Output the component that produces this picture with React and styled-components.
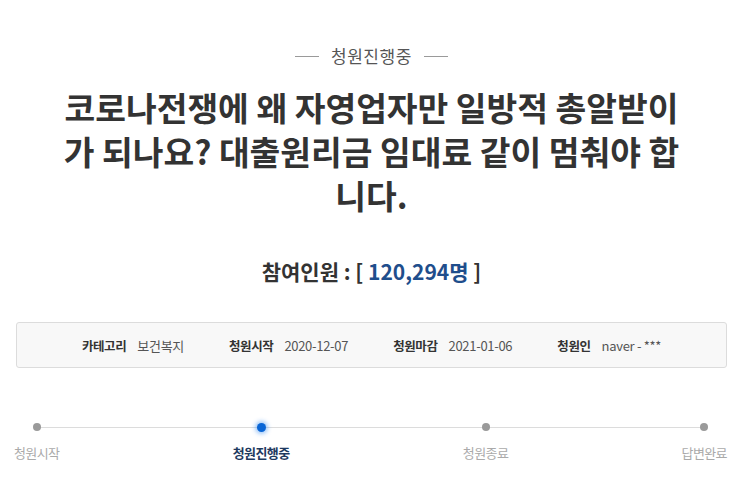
import React from 'react'
import styled, { createGlobalStyle } from 'styled-components'

const GlobalStyle = createGlobalStyle`
  body {
    margin: 0;
    background: #fff;
    font-family: "Noto Sans CJK KR", "Noto Sans", sans-serif;
  }
`

const info = [
  { label: '카테고리', value: '보건복지' },
  { label: '청원시작', value: '2020-12-07' },
  { label: '청원마감', value: '2021-01-06' },
  { label: '청원인', value: 'naver - ***' },
]

const steps = [
  { name: '청원시작' },
  { name: '청원진행중', active: true },
  { name: '청원종료' },
  { name: '답변완료' },
]

export default function App() {
  return (
    <Page>
      <GlobalStyle />
      <Status>
        <Rule />
        <StatusText>청원진행중</StatusText>
        <Rule />
      </Status>
      <Title>코로나전쟁에 왜 자영업자만 일방적 총알받이 가 되나요? 대출원리금 임대료 같이 멈춰야 합니다.</Title>
      <Count>
        참여인원 : [ <Number>120,294명</Number> ]
      </Count>
      <InfoBox>
        {info.map((item) => (
          <InfoItem key={item.label}>
            <InfoLabel>{item.label}</InfoLabel>
            <InfoValue>{item.value}</InfoValue>
          </InfoItem>
        ))}
      </InfoBox>
      <Track>
        {steps.map((step) => (
          <Step key={step.name}>
            <DotArea>
              <Dot active={step.active} />
            </DotArea>
            <StepName active={step.active}>{step.name}</StepName>
          </Step>
        ))}
      </Track>
    </Page>
  )
}

const Page = styled.div`
  width: 743px;
  height: 490px;
  padding-top: 44px;
  box-sizing: border-box;
  display: flex;
  flex-direction: column;
  align-items: center;
`

const Status = styled.div`
  display: flex;
  align-items: center;
  gap: 12px;
  height: 24px;
`

const Rule = styled.span`
  width: 24px;
  height: 1px;
  background: #9a9a9a;
`

const StatusText = styled.span`
  font-size: 17px;
  line-height: 24px;
  letter-spacing: 0.6px;
  color: #555;
`

const Title = styled.h1`
  width: 636px;
  margin: 17px 0 0;
  font-size: 33.4px;
  line-height: 44px;
  font-weight: 700;
  color: #333;
  text-align: center;
`

const Count = styled.div`
  margin-top: 39px;
  font-size: 21px;
  line-height: 30px;
  font-weight: 700;
  color: #333;
`

const Number = styled.span`
  color: #1f4e8c;
`

const InfoBox = styled.div`
  margin-top: 36px;
  width: 711px;
  height: 46px;
  box-sizing: border-box;
  border: 1px solid #dcdcdc;
  border-radius: 3px;
  background: #f8f8f8;
  display: flex;
  align-items: center;
  justify-content: center;
  gap: 45px;
`

const InfoItem = styled.div`
  display: flex;
  align-items: center;
  gap: 11px;
`

const InfoLabel = styled.span`
  font-size: 12.5px;
  letter-spacing: -0.4px;
  font-weight: 700;
  color: #333;
`

const InfoValue = styled.span`
  font-size: 13px;
  letter-spacing: -0.3px;
  color: #555;
`

const Track = styled.div`
  position: relative;
  margin-top: 54px;
  width: 743px;
  box-sizing: border-box;
  padding: 0 16px 0 14px;
  display: flex;
  justify-content: space-between;

  &::before {
    content: '';
    position: absolute;
    top: 5px;
    left: 37px;
    right: 40px;
    height: 1px;
    background: #dcdcdc;
  }
`

const Step = styled.div`
  position: relative;
  display: flex;
  flex-direction: column;
  align-items: center;
`

const DotArea = styled.div`
  height: 10px;
  display: flex;
  align-items: center;
  justify-content: center;
`

const Dot = styled.span`
  width: ${(p) => (p.active ? '9px' : '8px')};
  height: ${(p) => (p.active ? '9px' : '8px')};
  border-radius: 50%;
  background: ${(p) => (p.active ? '#0a66d6' : '#9a9a9a')};
  box-shadow: ${(p) => (p.active ? '0 0 4px 2px rgba(40, 130, 240, 0.45)' : 'none')};
`

const StepName = styled.span`
  margin-top: 12px;
  font-size: 13px;
  line-height: 18px;
  letter-spacing: -0.6px;
  font-weight: ${(p) => (p.active ? 700 : 400)};
  color: ${(p) => (p.active ? '#1e3a5f' : '#aaa')};
`
